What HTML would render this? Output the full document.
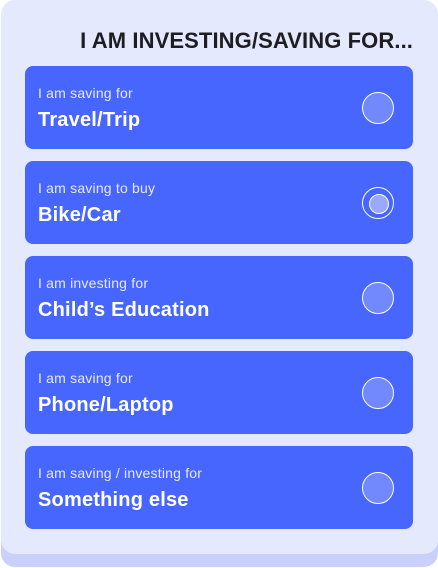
<!DOCTYPE html>
<html><head><meta charset="utf-8"><style>
*{margin:0;padding:0;box-sizing:border-box}
html,body{width:438px;height:568px;background:#fff;overflow:hidden;font-family:"Liberation Sans",sans-serif}
.shadow{position:absolute;left:1px;top:10px;width:437px;height:557px;background:#c9d0fb;border-radius:14px}
.card{position:absolute;left:1px;top:0;width:437px;height:554px;background:#e5e9fd;border-radius:14px}
.title{position:absolute;right:25px;top:28px;font-size:22px;font-weight:bold;color:#1d1d22;white-space:nowrap;letter-spacing:0.1px}
.item{position:absolute;left:25px;width:388px;height:83px;background:#4766fd;border-radius:8px;color:#fff}
.s{position:absolute;left:13px;top:19px;font-size:14px;letter-spacing:0.2px;color:#e6eaff}
.b{position:absolute;left:13px;top:43px;font-size:20px;font-weight:bold;letter-spacing:0.2px}
.c{position:absolute;left:337px;top:26px;width:32px;height:32px;border-radius:50%;background:#7289fd;border:1px solid #fff}
.c.sel{background:transparent}
.c.sel::after{content:"";position:absolute;left:6px;top:6px;width:18px;height:18px;border-radius:50%;background:#9aa9fd;border:1px solid #fff}
</style></head><body>
<div class="shadow"></div>
<div class="card"></div>
<div class="title">I AM INVESTING/SAVING FOR...</div>
<div class="item" style="top:66px"><div class="s">I am saving for</div><div class="b">Travel/Trip</div><div class="c"></div></div>
<div class="item" style="top:161px"><div class="s">I am saving to buy</div><div class="b">Bike/Car</div><div class="c sel"></div></div>
<div class="item" style="top:256px"><div class="s">I am investing for</div><div class="b">Child’s Education</div><div class="c"></div></div>
<div class="item" style="top:351px"><div class="s">I am saving for</div><div class="b">Phone/Laptop</div><div class="c"></div></div>
<div class="item" style="top:446px"><div class="s">I am saving / investing for</div><div class="b">Something else</div><div class="c"></div></div>
</body></html>
